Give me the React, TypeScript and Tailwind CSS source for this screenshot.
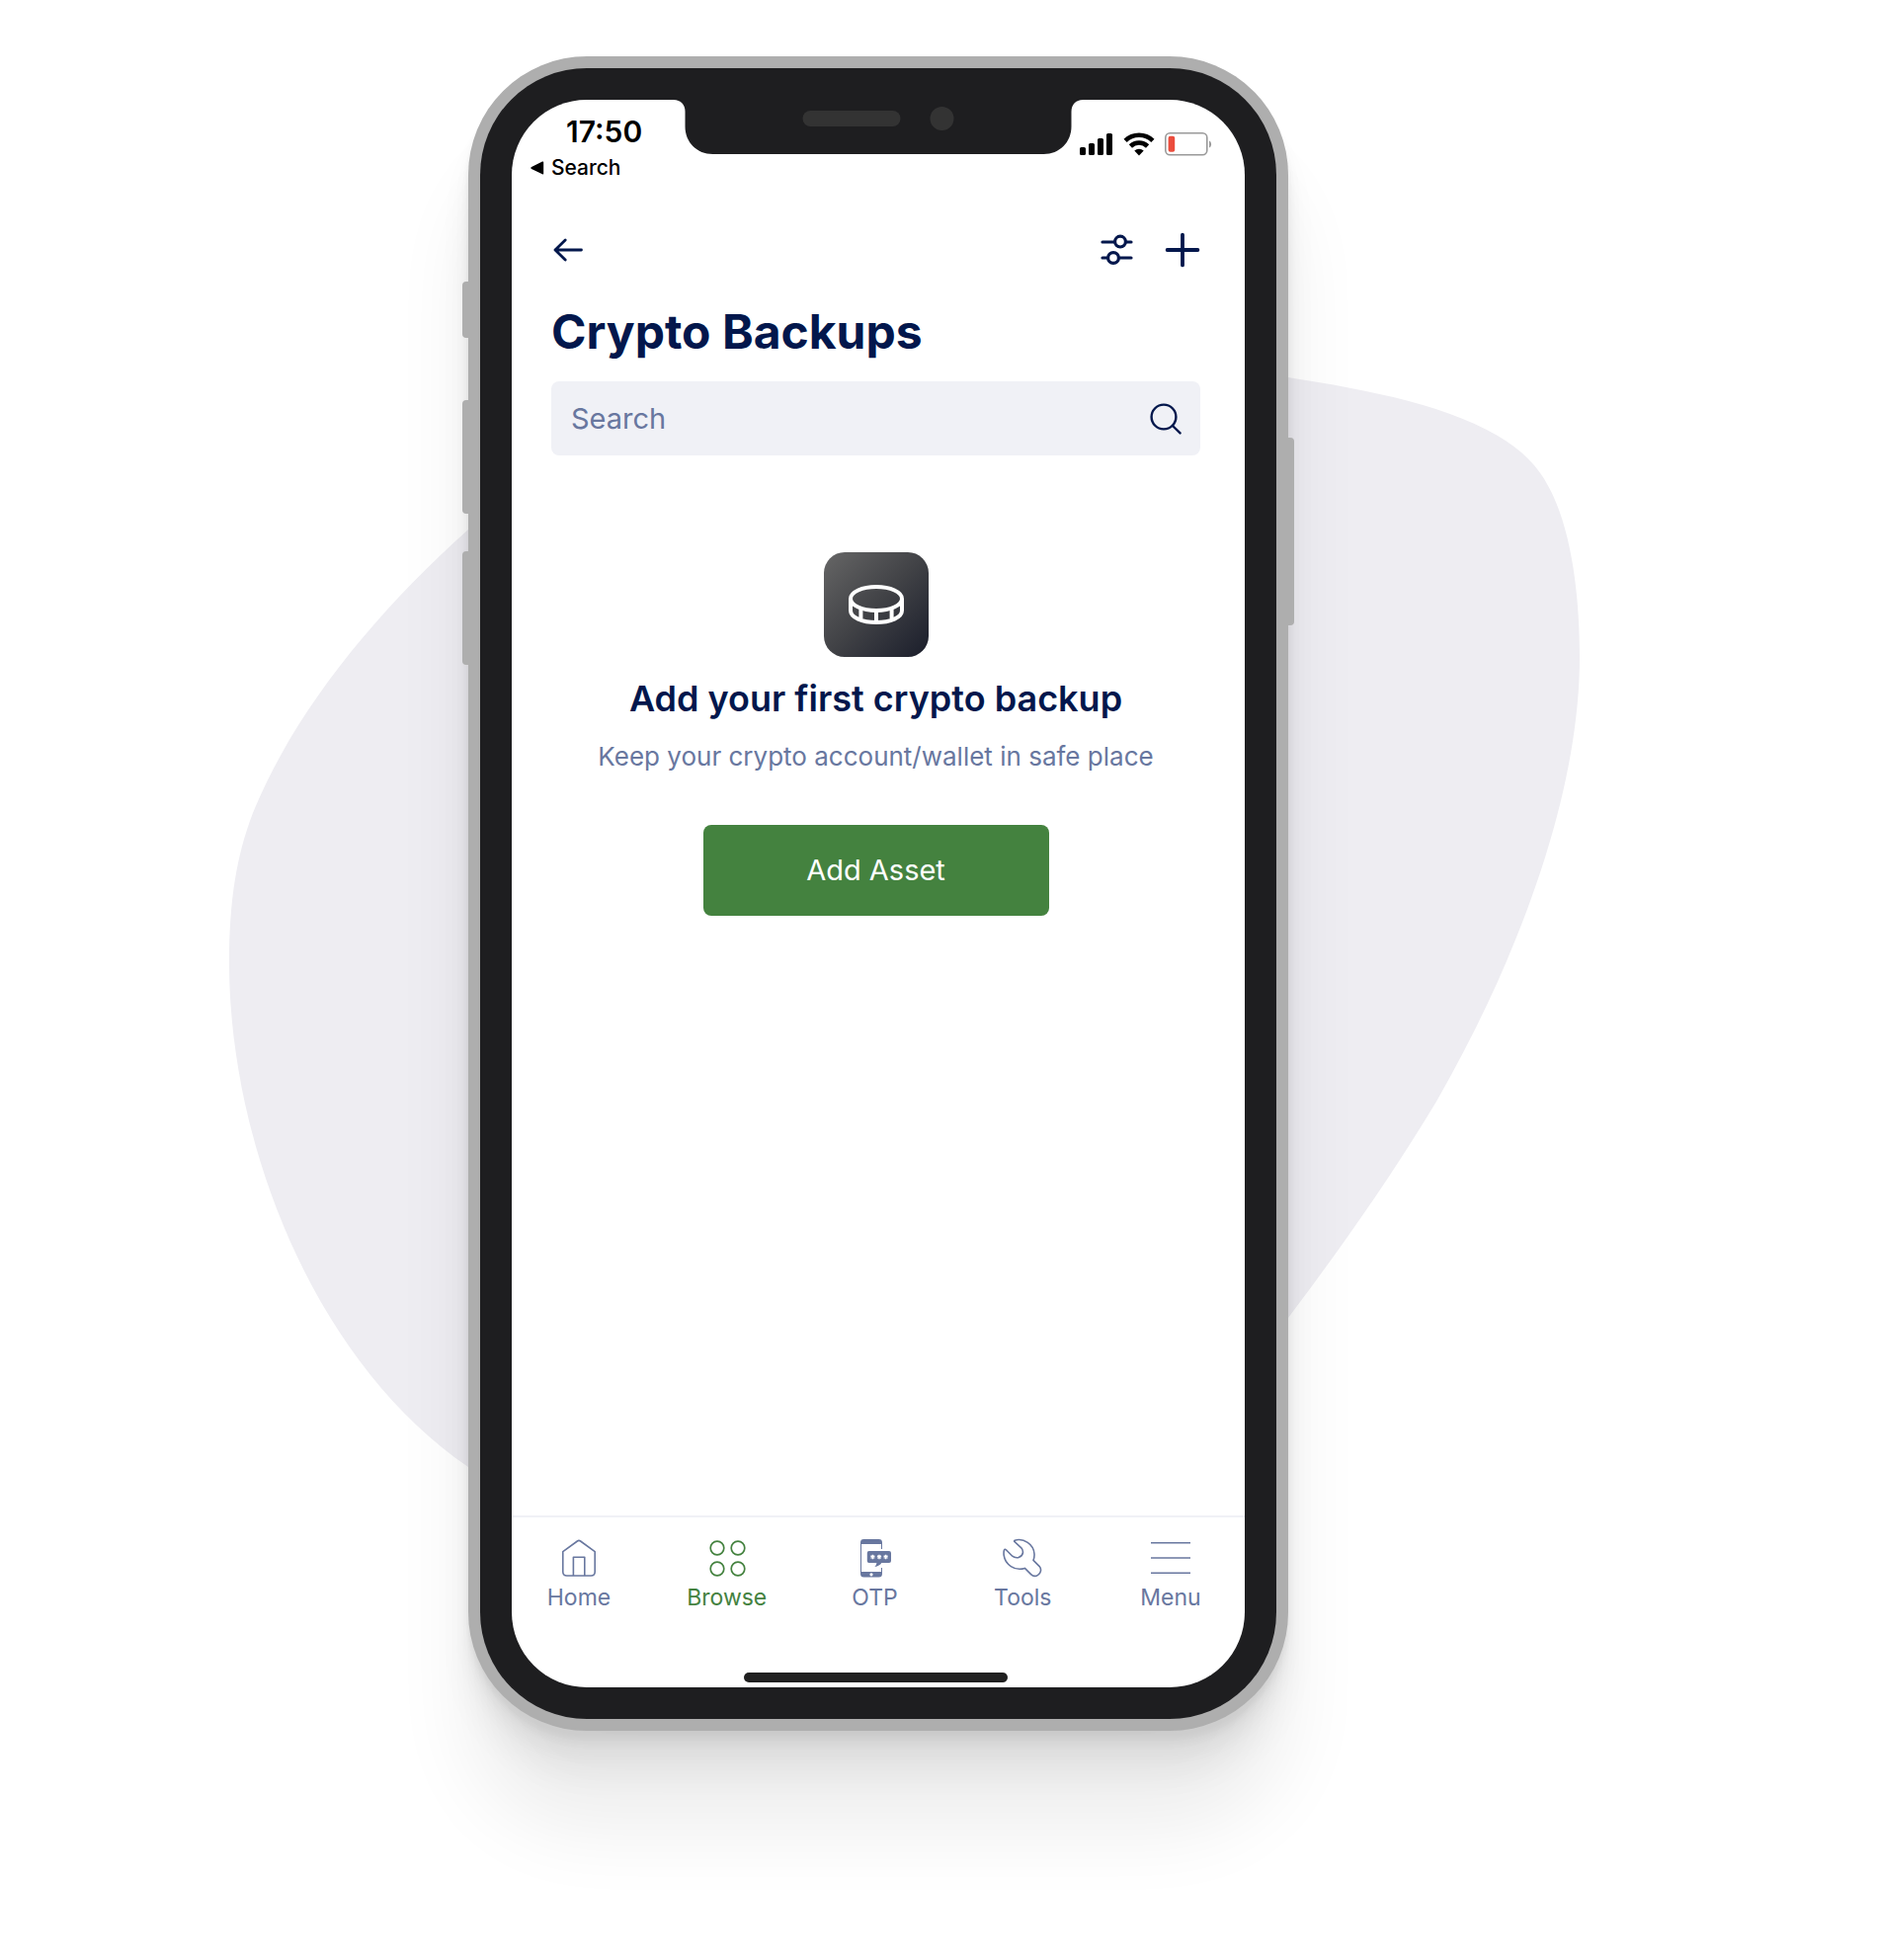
import React from "react";

const NAVY = "#03174c";

function Blob() {
  return (
    <svg
      viewBox="0 0 1900 1984"
      className="absolute left-1/2 top-0 w-[1900px] max-w-none -translate-x-1/2"
      aria-hidden="true"
    >
      <path
        fill="#eeedf2"
        d="M1304 382 C1400 397 1508 418 1553 471 C1590 514 1599 600 1599 665 C1599 800 1540 965 1454 1115 C1412 1185 1360 1260 1304 1334 L1304 1485 L474 1485 C320 1380 232 1160 232 974 C232 910 240 862 258 818 C300 718 380 620 474 536 Z"
      />
    </svg>
  );
}

function SignalIcon() {
  return (
    <svg viewBox="0 0 34 22" className="h-[22px] w-[34px]" aria-hidden="true">
      <rect x="0" y="14" width="6" height="8" rx="1.6" />
      <rect x="9" y="10" width="6" height="12" rx="1.6" />
      <rect x="18" y="5" width="6" height="17" rx="1.6" />
      <rect x="27" y="0" width="6" height="22" rx="1.6" />
    </svg>
  );
}

function WifiIcon() {
  return (
    <svg viewBox="0 0 32 24" className="h-6 w-8" aria-hidden="true">
      <g fill="none" stroke="#000" strokeWidth="4.6">
        <path d="M2.1 8.4 A20 20 0 0 1 29.9 8.4" />
        <path d="M7.4 14 A12.4 12.4 0 0 1 24.6 14" />
      </g>
      <path d="M11.3 18.6 A7 7 0 0 1 20.7 18.6 L16 23.4 Z" />
    </svg>
  );
}

function BatteryIcon() {
  return (
    <svg viewBox="0 0 48 24" className="h-6 w-12" aria-hidden="true">
      <rect x="0.8" y="0.8" width="42" height="22" rx="4.5" fill="none" stroke="#999" strokeWidth="1.6" />
      <rect x="3.6" y="3.8" width="6.6" height="16" rx="2" fill="#eb4d3d" />
      <path d="M45 8.4 C47.8 9.4 47.8 14.4 45 15.4 Z" fill="#999" />
    </svg>
  );
}

function StatusBar() {
  return (
    <div className="flex h-[95px] items-start justify-between pl-[19px] pr-[33px] font-medium text-black">
      <div>
        <div className="mt-3 pl-9 text-[30px] font-semibold leading-10">17:50</div>
        <a href="#search" className="mt-[3px] flex items-center gap-[7px] text-[21px] leading-7">
          <svg viewBox="0 0 14 14" className="h-[14px] w-[14px]" aria-hidden="true">
            <path d="M13.2 1.2 V12.8 Q13.2 13.8 12 13.2 L1 8 Q-0.4 7 1 6 L12 0.6 Q13.2 0.2 13.2 1.2 Z" />
          </svg>
          Search
        </a>
      </div>
      <div className="mt-[33px] flex items-center gap-[10px]">
        <SignalIcon />
        <WifiIcon />
        <BatteryIcon />
      </div>
    </div>
  );
}

function Notch() {
  return (
    <div className="absolute left-1/2 top-0 flex h-[55px] w-[391px] -translate-x-1/2 items-start justify-center">
      <svg viewBox="0 0 415 55" className="absolute left-[-12px] top-0 w-[415px] max-w-none" aria-hidden="true">
        <path
          fill="#1e1e20"
          d="M0 0 H415 C407 0 403 5 403 12 V27 C403 43 391 55 375 55 H40 C24 55 12 43 12 27 V12 C12 5 8 0 0 0 Z"
        />
      </svg>
      <div className="relative mt-[7px] flex items-center gap-[30px]">
        <div className="h-4 w-[99px] rounded-full bg-[#333]" />
        <div className="h-6 w-6 rounded-full bg-[#333]" />
      </div>
    </div>
  );
}

function Toolbar() {
  return (
    <div className="flex h-9 items-center justify-between">
      <button type="button" aria-label="Back">
        <svg viewBox="0 0 34 36" className="h-9 w-[34px]" fill="none" stroke={NAVY} strokeWidth="2.8" strokeLinecap="round" strokeLinejoin="round">
          <path d="M30.5 18 H4 M14.2 8 L4 18 L14.2 28" />
        </svg>
      </button>
      <div className="flex items-center gap-[31px]">
        <button type="button" aria-label="Filter">
          <svg viewBox="0 0 34 36" className="h-9 w-[34px]" fill="none" stroke={NAVY} strokeWidth="3.2" strokeLinecap="round">
            <path d="M2 10 H14 M26 10 H31 M2 26 H7 M19 26 H31" />
            <circle cx="20" cy="9.6" r="5.4" />
            <circle cx="13" cy="26" r="5.4" />
          </svg>
        </button>
        <button type="button" aria-label="Add">
          <svg viewBox="0 0 36 36" className="h-9 w-9" fill="none" stroke={NAVY} strokeWidth="3.8" strokeLinecap="round">
            <path d="M18 2.6 V33.4 M2.6 18 H33.4" />
          </svg>
        </button>
      </div>
    </div>
  );
}

function SearchBox() {
  return (
    <label className="mt-5 flex h-[75px] items-center rounded-lg bg-[#f0f1f6] pl-5 pr-[18px]">
      <input
        type="text"
        aria-label="Search"
        placeholder="Search"
        className="min-w-0 flex-1 bg-transparent text-[29px] text-[#03174c] outline-none placeholder:text-[#68779f]"
      />
      <svg viewBox="0 0 34 34" className="h-[34px] w-[34px]" fill="none" stroke={NAVY} strokeWidth="2.4" strokeLinecap="round" aria-hidden="true">
        <circle cx="15" cy="15" r="12.4" />
        <path d="M24 24 L31.6 31.4" />
      </svg>
    </label>
  );
}

function EmptyState() {
  return (
    <section className="mt-[98px] flex flex-1 flex-col items-center text-center">
      <div className="flex h-[106px] w-[106px] items-center justify-center rounded-[21px] bg-linear-to-br from-[#666] via-[#414246] to-[#1b1e2b]">
        <svg viewBox="0 0 56 40" className="h-10 w-14" fill="none" stroke="#fff" strokeWidth="4" aria-hidden="true">
          <ellipse cx="28" cy="14" rx="26" ry="12" />
          <path d="M2 14 V26 C2 33 13.6 38 28 38 S54 33 54 26 V14 M28 26 V38 M12.4 24 V35 M43.6 24 V35" />
        </svg>
      </div>
      <h2 className="mt-[18px] text-[36px] font-semibold leading-[48px] text-[#03174c]">Add your first crypto backup</h2>
      <p className="mt-[17px] text-[26px] leading-9 text-[#68779f]">Keep your crypto account/wallet in safe place</p>
      <button type="button" className="mt-[51px] h-[92px] w-[350px] rounded-lg bg-[#44823f] text-[29px] text-white">
        Add Asset
      </button>
    </section>
  );
}

const tabs = [
  {
    label: "Home",
    icon: (
      <g fill="none" stroke="currentColor" strokeWidth="1.6" strokeLinejoin="round">
        <path d="M3.8 13.6 L18.4 3 Q20 1.8 21.6 3 L36.2 13.6 V34 Q36.2 38 32.2 38 H7.8 Q3.8 38 3.8 34 Z" />
        <path d="M14.4 38 V19.2 H25.8 V38" />
      </g>
    ),
  },
  {
    label: "Browse",
    active: true,
    icon: (
      <g fill="none" stroke="currentColor" strokeWidth="1.7">
        <circle cx="10" cy="10" r="6.8" />
        <circle cx="31" cy="10" r="6.8" />
        <circle cx="10" cy="31" r="6.8" />
        <circle cx="31" cy="31" r="6.8" />
      </g>
    ),
  },
  {
    label: "OTP",
    icon: (
      <g>
        <path fill="currentColor" d="M5 4.4 Q5 1 8.4 1 H23.6 Q27 1 27 4.4 V11 H26 V6 H6 V34 H26 V30 H27 V36 Q27 39.6 23.6 39.6 H8.4 Q5 39.6 5 36 Z" />
        <path fill="currentColor" d="M13.6 13 H34 Q36 13 36 15 V23 Q36 25 34 25 H26.4 Q24.4 28 19.4 29 Q21.4 27 21.4 25 H13.6 Q11.8 25 11.8 23 V15 Q11.8 13 13.6 13 Z" />
        <circle cx="16" cy="36.8" r="1.6" fill="#fff" />
        <path
          stroke="#fff"
          strokeWidth="1.4"
          d="M17.4 16.8 V21.2 M15.4 17.9 L19.4 20.1 M19.4 17.9 L15.4 20.1 M24 16.8 V21.2 M22 17.9 L26 20.1 M26 17.9 L22 20.1 M30.6 16.8 V21.2 M28.6 17.9 L32.6 20.1 M32.6 17.9 L28.6 20.1"
        />
      </g>
    ),
  },
  {
    label: "Tools",
    icon: (
      <path
        fill="none"
        stroke="currentColor"
        strokeWidth="1.6"
        strokeLinejoin="round"
        d="M12.2 2.2 C21 -0.5 31.5 6 32 16 Q32.2 19.5 31 22.4 L37.2 28.6 C39.6 31.4 38.6 35.6 35.6 37.4 C33.4 38.8 30.4 38.4 28.6 36.6 L22.4 30.4 C12 33.6 2.4 26.6 1.2 17.4 Q0.8 14.4 1.4 12.2 Q2 10.6 3.4 11.8 L9.8 18.2 Q12.4 20.4 16 19.6 Q19.6 18.4 20.4 15 Q20.8 12 18.8 9.8 L11.8 3.4 Q11.4 2.6 12.2 2.2 Z"
      />
    ),
  },
  {
    label: "Menu",
    icon: <path stroke="currentColor" strokeWidth="1.6" d="M0 4.8 H40 M0 20 H40 M0 35.2 H40" />,
  },
];

function TabBar() {
  return (
    <nav className="flex h-[174px] items-start justify-between border-t-2 border-[#f0f1f6] pl-[22px] pr-[29px] pt-[21px]">
      {tabs.map((tab) => (
        <a
          key={tab.label}
          href={"#" + tab.label.toLowerCase()}
          className={
            tab.active
              ? "flex w-[92px] flex-col items-center gap-1 text-[23px] leading-8 text-[#44823f]"
              : "flex w-[92px] flex-col items-center gap-1 text-[23px] leading-8 text-[#68779f]"
          }
        >
          <svg viewBox="0 0 40 40" className="h-10 w-10" aria-hidden="true">
            {tab.icon}
          </svg>
          {tab.label}
        </a>
      ))}
    </nav>
  );
}

export default function App() {
  return (
    <main className="relative flex min-h-screen items-start justify-center overflow-hidden bg-white pt-[57px] font-['Inter','Liberation_Sans',sans-serif]">
      <Blob />
      <div className="relative flex min-h-[1695px] w-full max-w-[830px] rounded-[120px] bg-[#aeaeae] p-3 shadow-[0_100px_80px_rgba(0,0,0,0.07),0_42px_33px_rgba(0,0,0,0.05),0_22px_18px_rgba(0,0,0,0.04),0_12px_10px_rgba(0,0,0,0.035),0_7px_5px_rgba(0,0,0,0.03)] lg:mr-[122px]">
        <div className="absolute left-[-6px] top-[228px] h-[57px] w-2 rounded-l-sm bg-[#aeaeae]" />
        <div className="absolute left-[-6px] top-[348px] h-[115px] w-2 rounded-l-sm bg-[#aeaeae]" />
        <div className="absolute left-[-6px] top-[501px] h-[115px] w-2 rounded-l-sm bg-[#aeaeae]" />
        <div className="absolute right-[-6px] top-[386px] h-[190px] w-2 rounded-r-sm bg-[#aeaeae]" />
        <div className="flex flex-1 rounded-[108px] bg-[#1e1e20] p-8">
          <div className="relative flex flex-1 flex-col overflow-hidden rounded-[76px] bg-white">
            <StatusBar />
            <Notch />
            <div className="flex flex-1 flex-col pl-10 pr-[45px] pt-[39px]">
              <Toolbar />
              <h1 className="mt-[35px] text-[48px] font-bold leading-[60px] text-[#03174c]">Crypto Backups</h1>
              <SearchBox />
              <EmptyState />
            </div>
            <TabBar />
            <div className="absolute inset-x-0 bottom-[5px] flex justify-center pr-[6px]">
              <div className="h-[10px] w-[267px] rounded-full bg-[#202020]" />
            </div>
          </div>
        </div>
      </div>
    </main>
  );
}
